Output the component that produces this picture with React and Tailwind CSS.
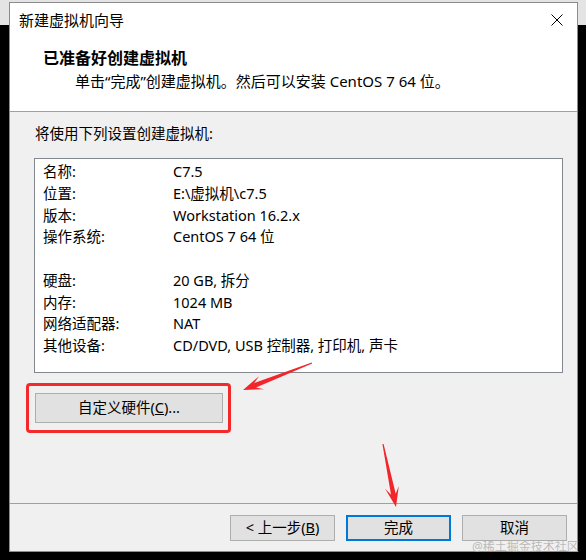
const rows = [
  ['名称:', 'C7.5'],
  ['位置:', 'E:\\虚拟机\\c7.5'],
  ['版本:', 'Workstation 16.2.x'],
  ['操作系统:', 'CentOS 7 64 位'],
  null,
  ['硬盘:', '20 GB, 拆分'],
  ['内存:', '1024 MB'],
  ['网络适配器:', 'NAT'],
  ['其他设备:', 'CD/DVD, USB 控制器, 打印机, 声卡'],
];

// tapered red arrow from tail to tip
function arrowPoints(x1, y1, x2, y2) {
  const dx = x2 - x1;
  const dy = y2 - y1;
  const len = Math.hypot(dx, dy);
  const ux = dx / len;
  const uy = dy / len;
  const nx = -uy;
  const ny = ux;
  const pt = (d, w) => `${x2 - ux * d + nx * w},${y2 - uy * d + ny * w}`;
  return [
    pt(len, 0.6),
    pt(13, 2.4),
    pt(20, 7),
    pt(0, 0),
    pt(20, -7),
    pt(13, -2.4),
    pt(len, -0.6),
  ].join(' ');
}

function Btn({ children, primary }) {
  return (
    <button
      className={`w-[105px] h-[26px] bg-[#e1e1e1] text-[14.5px] text-black flex items-center justify-center ${
        primary ? 'border-2 border-[#0078d7]' : 'border border-[#adadad]'
      }`}
    >
      {children}
    </button>
  );
}

export default function App() {
  return (
    <div
      className="relative w-[586px] h-[560px] overflow-hidden bg-[linear-gradient(#e4e4e4_0_25px,#000_25px)] pt-[2px] pl-[9px] text-black"
      style={{ fontFamily: '"Noto Sans", "Noto Sans CJK SC", sans-serif' }}
    >
      <div className="w-[569px] h-[550px] border border-[#8c8c8c] bg-[#f0f0f0] flex flex-col">
        <div className="bg-white">
          <div className="h-[34px] flex items-center justify-between pl-[9px] pr-[14px]">
            <span className="text-[15px]">新建虚拟机向导</span>
            <svg width="12" height="12" viewBox="0 0 12 12" className="text-black">
              <path d="M0.5 0.5 L11.5 11.5 M11.5 0.5 L0.5 11.5" stroke="currentColor" strokeWidth="1" />
            </svg>
          </div>
          <div className="pt-[11px] pb-[20px] border-b border-[#a0a0a0]">
            <div className="pl-[33px] text-[16px] font-bold leading-[20px]">已准备好创建虚拟机</div>
            <div className="pl-[65px] mt-[3px] text-[15px] leading-[20px]">
              单击“完成”创建虚拟机。然后可以安装 CentOS 7 64 位。
            </div>
          </div>
        </div>

        <div className="flex-1 pt-[10px] flex flex-col">
          <div className="pl-[25px] text-[14.5px] leading-[22px]">将使用下列设置创建虚拟机:</div>
          <div className="ml-[24px] mt-[14px] w-[529px] h-[215px] bg-white border border-[#828790] pt-[2px] pl-[8px] text-[14.5px] leading-[21.75px]">
            {rows.map((r, i) =>
              r ? (
                <div key={i} className="flex">
                  <span className="w-[130px]">{r[0]}</span>
                  <span>{r[1]}</span>
                </div>
              ) : (
                <div key={i} className="h-[21.75px]" />
              )
            )}
          </div>
          <div className="relative ml-[25px] mt-[20px] w-[188px]">
            <button className="w-[188px] h-[30px] bg-[#e1e1e1] border border-[#adadad] text-[14.5px] flex items-center justify-center">
              自定义硬件(<span className="underline">C</span>)...
            </button>
            <div className="absolute left-[-9px] top-[-10px] right-[-8px] bottom-[-10px] border-[3px] border-[#f42a2a] rounded-[4px]" />
          </div>
        </div>

        <div className="border-t border-[#a0a0a0] h-[48px] pt-[11px] pr-[10px] flex justify-end gap-[11px]">
          <Btn>
            &lt; 上一步(<span className="underline">B</span>)
          </Btn>
          <Btn primary>完成</Btn>
          <Btn>取消</Btn>
        </div>
      </div>

      <svg className="absolute left-0 top-0 pointer-events-none" width="586" height="560">
        <polygon points={arrowPoints(312, 363, 243, 390)} fill="#f2262a" />
        <polygon points={arrowPoints(383, 444, 396, 507)} fill="#f2262a" />
      </svg>
      <div className="absolute left-[472px] top-[539px] text-[12px] leading-[16px] text-[#a8a8a8]/75 whitespace-nowrap">
        @稀土掘金技术社区
      </div>
    </div>
  );
}
